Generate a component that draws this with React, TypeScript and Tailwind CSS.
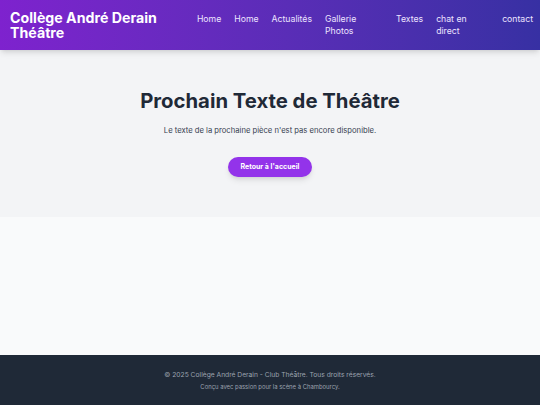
import React from "react";

export default function App() {
  const font = { fontFamily: "Inter, 'Noto Sans', sans-serif" };
  return (
    <div className="min-h-[405px] flex flex-col bg-[#f9fafb]" style={font}>
      <header className="h-[50px] bg-gradient-to-r from-[#7e22ce] to-[#3730a3] shadow-md flex items-start justify-between pl-[10px] pr-[7px] relative z-10">
        <div className="pt-[10px] text-white font-bold text-[14.2px] leading-[15px] w-[160px]">
          Collège André Derain Théâtre
        </div>
        <nav className="flex gap-[13px] pt-[13px] text-[8.7px] leading-[12px] text-[#ede4ff]">
          <a>Home</a>
          <a>Home</a>
          <a>Actualités</a>
          <a className="w-[58px]">Gallerie Photos</a>
          <a>Textes</a>
          <a className="w-[53px]">chat en direct</a>
          <a>contact</a>
        </nav>
      </header>
      <section className="bg-[#f3f4f6] h-[167px] flex flex-col items-center pt-[39px]">
        <h1 className="text-[20.3px] leading-[24px] font-bold text-[#1f2937]">Prochain Texte de Théâtre</h1>
        <p className="mt-[13px] text-[7.65px] leading-[10px] text-[#374151]">Le texte de la prochaine pièce n'est pas encore disponible.</p>
        <button className="mt-[21px] h-[20px] w-[84px] rounded-full bg-[#9333ea] text-white font-bold text-[7px] shadow-md">Retour à l'accueil</button>
      </section>
      <div className="flex-1" />
      <footer className="h-[50px] bg-[#1f2937] flex flex-col items-center pt-[15px]">
        <p className="text-[6.7px] leading-[10px] text-[#9ca3af]">© 2025 Collège André Derain - Club Théâtre. Tous droits réservés.</p>
        <p className="mt-[2px] text-[5.9px] leading-[9px] text-[#9ca3af]">Conçu avec passion pour la scène à Chambourcy.</p>
      </footer>
    </div>
  );
}
